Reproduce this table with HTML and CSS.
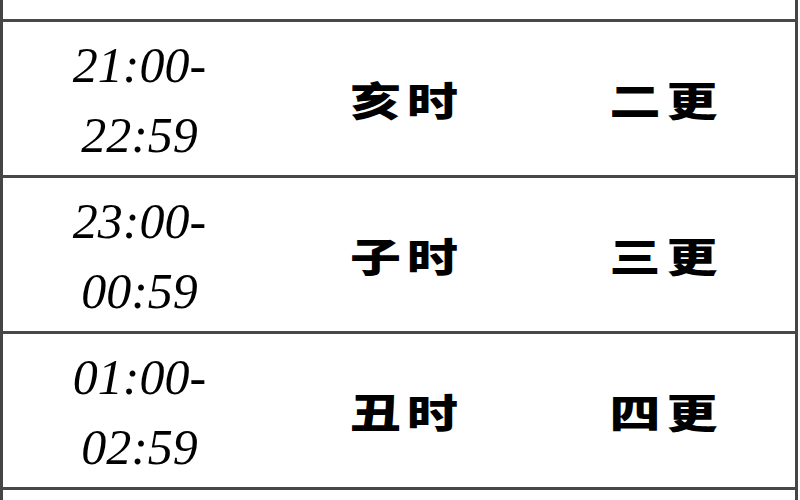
FILE: index.html
```html
<!DOCTYPE html>
<html lang="zh">
<head>
<meta charset="utf-8">
<title>时辰与更</title>
<link rel="stylesheet" href="styles.css">
</head>
<body>
<div class="table">
  <div class="row row-partial"></div>
  <div class="row">
    <div class="cell time">21:00-<br>22:59</div>
    <div class="cell cn"><span>亥时</span></div>
    <div class="cell cn"><span>二更</span></div>
  </div>
  <div class="row">
    <div class="cell time">23:00-<br>00:59</div>
    <div class="cell cn"><span>子时</span></div>
    <div class="cell cn"><span>三更</span></div>
  </div>
  <div class="row">
    <div class="cell time">01:00-<br>02:59</div>
    <div class="cell cn"><span>丑时</span></div>
    <div class="cell cn"><span>四更</span></div>
  </div>
  <div class="row row-tail"></div>
</div>
</body>
</html>
```

FILE: styles.css
```css
html, body {
  margin: 0;
  padding: 0;
  background: #ffffff;
  overflow: hidden;
}

.table {
  width: 792px;
  border-left: 3px solid #454545;
  border-right: 3px solid #454545;
  height: 500px;
  box-sizing: content-box;
}

.row {
  display: grid;
  grid-template-columns: 273px 252px 1fr;
  height: 153px;
  border-bottom: 3px solid #484848;
}

.row-partial {
  height: 19px;
}

.row-tail {
  border-bottom: none;
  height: 20px;
}

.cell {
  display: flex;
  align-items: center;
  justify-content: center;
  text-align: center;
}

.time {
  font-family: "Liberation Serif", "Times New Roman", serif;
  font-style: italic;
  font-size: 50px;
  line-height: 70px;
  color: #000000;
  padding-top: 2px;
}

.cn {
  font-family: "Noto Sans CJK SC", "Noto Sans CJK JP", sans-serif;
  font-weight: 900;
  font-size: 51px;
  letter-spacing: 6px;
  color: #000000;
}

.cn span {
  display: inline-block;
  transform: scaleY(0.78);
  margin-right: -6px;
  padding-left: 4px;
}
```
